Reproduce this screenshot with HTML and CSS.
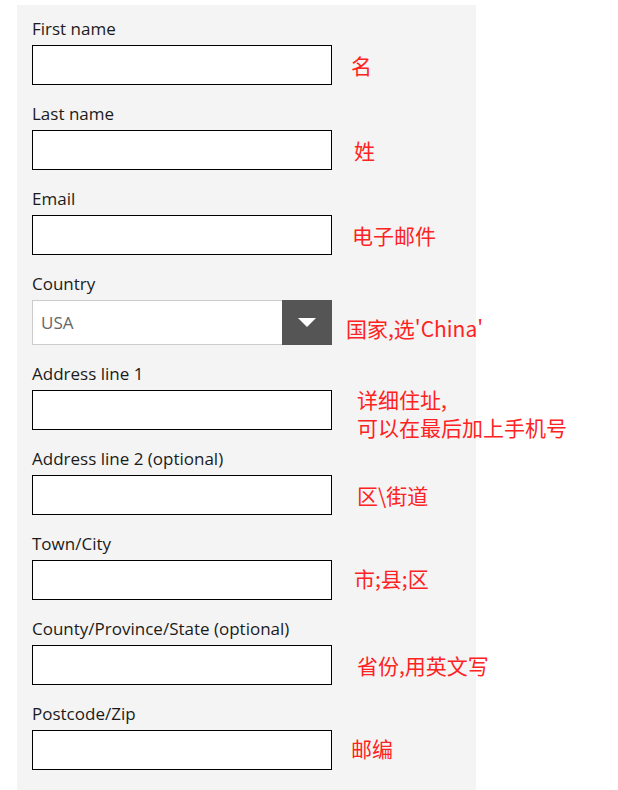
FILE: index.html
```html
<!DOCTYPE html>
<html lang="zh-CN">
  <head>
    <meta charset="UTF-8">
    <meta name="viewport" content="width=device-width, initial-scale=1">
    <title>Address form</title>
    <link rel="stylesheet" href="styles.css">
  </head>
  <body>
    <form class="panel">
      <div class="field">
        <label class="field-label" for="first-name">First name</label>
        <div class="field-row">
          <input class="text-input" id="first-name" type="text">
          <span class="note note-near">名</span>
        </div>
      </div>
      <div class="field">
        <label class="field-label" for="last-name">Last name</label>
        <div class="field-row">
          <input class="text-input" id="last-name" type="text">
          <span class="note">姓</span>
        </div>
      </div>
      <div class="field">
        <label class="field-label" for="email">Email</label>
        <div class="field-row">
          <input class="text-input" id="email" type="text">
          <span class="note note-mail">电子邮件</span>
        </div>
      </div>
      <div class="field">
        <label class="field-label" for="country">Country</label>
        <div class="field-row field-row-select">
          <div class="select">
            <select class="select-input" id="country">
              <option>USA</option>
              <option>China</option>
            </select>
            <span class="select-btn">
              <svg width="18" height="9" viewBox="0 0 18 9"><path d="M0 0h18L9 9z" fill="#fff"/></svg>
            </span>
          </div>
          <span class="note note-country">国家,选'China'</span>
        </div>
      </div>
      <div class="field">
        <label class="field-label" for="address1">Address line 1</label>
        <div class="field-row">
          <input class="text-input" id="address1" type="text">
          <span class="note note-far note-two">详细住址,<br>可以在最后加上手机号</span>
        </div>
      </div>
      <div class="field">
        <label class="field-label" for="address2">Address line 2 (optional)</label>
        <div class="field-row">
          <input class="text-input" id="address2" type="text">
          <span class="note note-far">区\街道</span>
        </div>
      </div>
      <div class="field">
        <label class="field-label" for="city">Town/City</label>
        <div class="field-row">
          <input class="text-input" id="city" type="text">
          <span class="note note-up">市;县;区</span>
        </div>
      </div>
      <div class="field">
        <label class="field-label" for="state">County/Province/State (optional)</label>
        <div class="field-row">
          <input class="text-input" id="state" type="text">
          <span class="note note-far">省份,用英文写</span>
        </div>
      </div>
      <div class="field">
        <label class="field-label" for="zip">Postcode/Zip</label>
        <div class="field-row">
          <input class="text-input" id="zip" type="text">
          <span class="note note-near note-up">邮编</span>
        </div>
      </div>
    </form>
  </body>
</html>
```

FILE: styles.css
```css
body {
  margin: 0;
  background-color: #ffffff;
  font-family: 'Open Sans', 'Noto Sans', sans-serif;
}

.panel {
  box-sizing: border-box;
  width: 459px;
  margin: 5px 0 0 17px;
  padding: 14px 15px 24px 15px;
  background-color: #f4f4f4;
}

.field {
  margin-bottom: 19px;
}
.field:last-child {
  margin-bottom: 0;
}
.field-label {
  display: block;
  height: 20px;
  margin-bottom: 6px;
  line-height: 20px;
  font-size: 17px;
  color: #1b1b1b;
}
.field-row {
  display: flex;
  align-items: center;
  height: 40px;
}
.field-row-select {
  height: 45px;
  margin-bottom: 1px;
}

.text-input {
  box-sizing: border-box;
  flex: none;
  width: 300px;
  height: 40px;
  margin: 0;
  border: 1px solid #000000;
  border-radius: 0;
  background-color: #ffffff;
}

.select {
  box-sizing: border-box;
  flex: none;
  display: flex;
  width: 300px;
  height: 45px;
  border: 1px solid #cccccc;
  background-color: #ffffff;
}
.select-input {
  flex: 1;
  min-width: 0;
  margin: 0;
  padding: 0 0 0 8px;
  border: 0;
  background: transparent;
  appearance: none;
  -webkit-appearance: none;
  font-family: 'Open Sans', 'Noto Sans', sans-serif;
  font-size: 17px;
  color: #666666;
}
.select-btn {
  display: flex;
  align-items: center;
  justify-content: center;
  width: 50px;
  margin: -1px -1px -1px 0;
  background-color: #555555;
}

.note {
  flex: none;
  margin-left: 22px;
  white-space: nowrap;
  font-family: 'Noto Sans CJK SC', sans-serif;
  font-size: 21px;
  line-height: 28px;
  color: #ff2222;
}
.note-near { margin-left: 19px; }
.note-mail { margin-left: 20px; }
.note-far { margin-left: 25px; }
.note-country {
  margin-left: 14px;
  margin-top: 10px;
}
.note-two { margin-top: 6px; }
.note-up { margin-top: -5px; }
```
